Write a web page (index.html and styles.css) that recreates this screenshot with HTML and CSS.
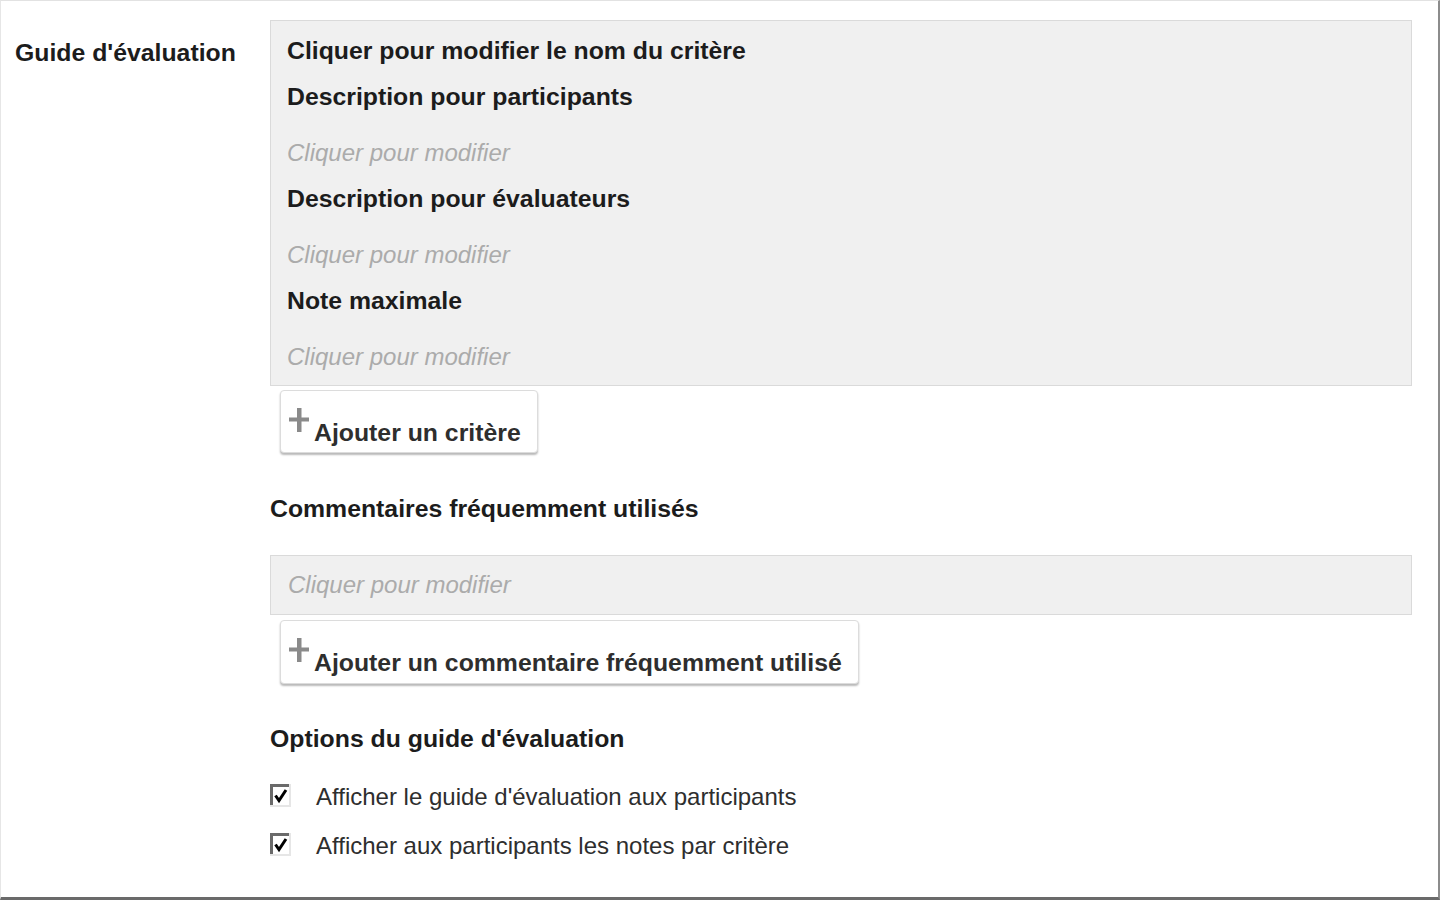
FILE: index.html
```html
<!DOCTYPE html>
<html lang="fr">
<head>
<meta charset="utf-8">
<title>Guide d'évaluation</title>
<link rel="stylesheet" href="styles.css">
</head>
<body>
<div class="page">
  <div class="row">
    <div class="row-label">Guide d'évaluation</div>
    <div class="row-body">
      <div class="criteria">
        <div class="field-title">Cliquer pour modifier le nom du critère</div>
        <div class="field-title">Description pour participants</div>
        <div class="field-value">Cliquer pour modifier</div>
        <div class="field-title">Description pour évaluateurs</div>
        <div class="field-value">Cliquer pour modifier</div>
        <div class="field-title field-title-last">Note maximale</div>
        <div class="field-value">Cliquer pour modifier</div>
      </div>
      <button class="add-btn" type="button">
        <svg class="plus" width="20" height="25" viewBox="0 0 20 25" aria-hidden="true">
          <rect x="8" y="1" width="4.5" height="24" fill="#8a8a8a"/>
          <rect x="0" y="10.5" width="20" height="4" fill="#8a8a8a"/>
        </svg>
        <span class="add-btn-text">Ajouter un critère</span>
      </button>

      <div class="section-title section-comments">Commentaires fréquemment utilisés</div>
      <div class="comment-box">Cliquer pour modifier</div>
      <button class="add-btn add-btn-2" type="button">
        <svg class="plus" width="20" height="25" viewBox="0 0 20 25" aria-hidden="true">
          <rect x="8" y="1" width="4.5" height="24" fill="#8a8a8a"/>
          <rect x="0" y="10.5" width="20" height="4" fill="#8a8a8a"/>
        </svg>
        <span class="add-btn-text">Ajouter un commentaire fréquemment utilisé</span>
      </button>

      <div class="section-title section-options">Options du guide d'évaluation</div>
      <div class="options">
        <label class="option">
          <svg class="check" width="21" height="23" viewBox="0 0 21 23" aria-hidden="true">
            <rect x="0" y="0" width="21" height="23" fill="#e6e6e6"/>
            <rect x="0" y="0" width="19" height="21" fill="#6a6a6a"/>
            <rect x="3" y="3" width="16" height="18" fill="#ffffff"/>
            <path d="M5.5 11.5 L9 16.5 L16 6" fill="none" stroke="#000" stroke-width="3"/>
          </svg>
          <span>Afficher le guide d'évaluation aux participants</span>
        </label>
        <label class="option">
          <svg class="check" width="21" height="23" viewBox="0 0 21 23" aria-hidden="true">
            <rect x="0" y="0" width="21" height="23" fill="#e6e6e6"/>
            <rect x="0" y="0" width="19" height="21" fill="#6a6a6a"/>
            <rect x="3" y="3" width="16" height="18" fill="#ffffff"/>
            <path d="M5.5 11.5 L9 16.5 L16 6" fill="none" stroke="#000" stroke-width="3"/>
          </svg>
          <span>Afficher aux participants les notes par critère</span>
        </label>
      </div>
    </div>
  </div>
</div>
</body>
</html>
```

FILE: styles.css
```css
html, body {
  margin: 0;
  padding: 0;
  background: #ffffff;
}

.page {
  box-sizing: border-box;
  width: 1440px;
  height: 900px;
  overflow: hidden;
  border-top: 1px solid #e2e2e2;
  border-left: 1px solid #e6e6e6;
  border-right: 2px solid #8c8c8c;
  border-bottom: 3px solid #6a6a6a;
  font-family: "Liberation Sans", Arial, sans-serif;
  color: #1c1c1c;
}

.row {
  display: grid;
  grid-template-columns: 269px 1142px;
  padding-top: 19px;
}

.row-label {
  padding-left: 14px;
  padding-top: 10px;
  font-size: 24.8px;
  font-weight: bold;
  line-height: 46px;
}

.row-body {
  display: flex;
  flex-direction: column;
  align-items: flex-start;
}

.criteria {
  box-sizing: border-box;
  width: 100%;
  background: #f0f0f0;
  border: 1px solid #dadada;
  padding: 7px 16px 5px 16px;
}

.field-title {
  font-size: 24.8px;
  font-weight: bold;
  line-height: 46px;
  color: #1c1c1c;
}

.field-value {
  margin-top: 10px;
  font-size: 24px;
  font-style: italic;
  line-height: 46px;
  color: #ababab;
}

.add-btn {
  box-sizing: border-box;
  display: inline-flex;
  align-items: flex-start;
  height: 63px;
  margin: 4px 0 0 10px;
  padding: 0 16px 0 8px;
  background: #ffffff;
  border: 1px solid #dcdcdc;
  border-radius: 4px;
  box-shadow: 0 2px 2px rgba(0, 0, 0, 0.28);
  font-family: "Liberation Sans", Arial, sans-serif;
  cursor: pointer;
}

.add-btn-2 {
  height: 64px;
  margin-top: 5px;
}

.plus {
  display: block;
  margin-top: 16px;
  flex: none;
}

.add-btn-text {
  margin-top: 27px;
  margin-left: 5px;
  font-size: 24.8px;
  font-weight: bold;
  line-height: 30px;
  color: #2e2e2e;
  white-space: nowrap;
}

.section-title {
  font-size: 24.8px;
  font-weight: bold;
  line-height: 46px;
  color: #1c1c1c;
}

.section-comments {
  margin-top: 33px;
}

.comment-box {
  box-sizing: border-box;
  width: 100%;
  height: 60px;
  margin-top: 23px;
  padding-left: 17px;
  background: #f0f0f0;
  border: 1px solid #dadada;
  font-size: 24px;
  font-style: italic;
  line-height: 58px;
  color: #ababab;
}

.section-options {
  margin-top: 32px;
}

.options {
  margin-top: 10px;
  display: flex;
  flex-direction: column;
}

.option {
  display: flex;
  align-items: center;
  height: 49px;
  font-size: 24px;
  line-height: 49px;
  color: #2e2e2e;
}

.check {
  display: block;
  flex: none;
  margin-top: -2px;
  margin-right: 25px;
}
```
